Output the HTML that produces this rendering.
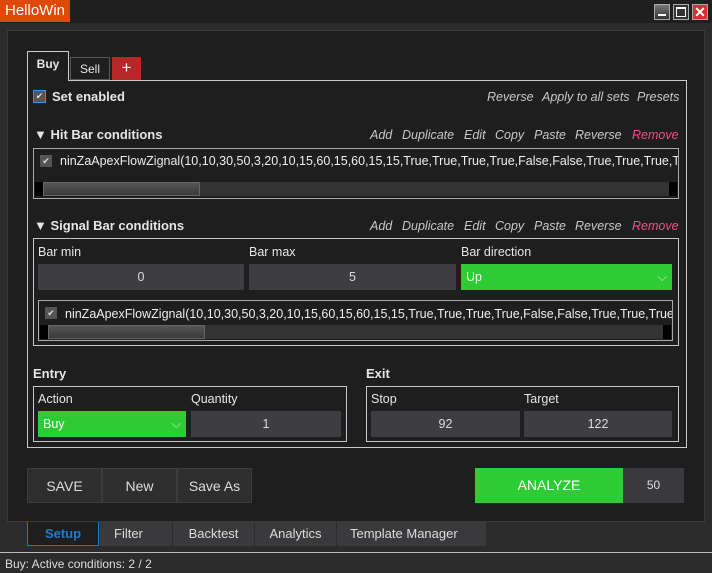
<!DOCTYPE html>
<html><head><style>
*{margin:0;padding:0;box-sizing:border-box}
body{width:712px;height:573px;background:#2b2b2b;font-family:"Liberation Sans",sans-serif;font-size:13px;color:#e6e6e6;position:relative;overflow:hidden}
.a{position:absolute}
.t{position:absolute;white-space:nowrap;line-height:16px}
.lk{font-style:italic;color:#c8c8c8;font-size:12.5px}
.inp{position:absolute;background:#3d3d42;color:#ddd;text-align:center;line-height:26px;font-size:12.5px}
.grn{position:absolute;background:#2ecc34;color:#fff;line-height:26px;padding-left:5px;font-size:12.5px}
.box{position:absolute;border:1px solid #c8c8c8}
.cb{position:absolute;width:12px;height:12px;background:#555;color:#ddd;font-size:9px;line-height:12px;text-align:center}
.btn{position:absolute;background:#2e2e2e;border:1px solid #3c3c3c;color:#ddd;text-align:center;line-height:34px;font-size:14px}
.bt{position:absolute;background:#3a3a3d;color:#ddd;text-align:center;line-height:24px;top:522px;height:24px}
.sb{position:absolute;height:14px;background:#333}
.sb i{position:absolute;left:0;top:0;width:8px;height:14px;background:#000}
.sb b{position:absolute;left:8px;top:0;width:157px;height:14px;background:linear-gradient(#555,#3a3a3a);border:1px solid #666}
.sb u{position:absolute;right:0;top:0;width:8px;height:14px;background:#000}
</style></head><body>
<div class="a" style="left:0;top:0;width:712px;height:23px;background:#1f1f1f"></div>
<div class="a" style="left:0;top:0;width:70px;height:22px;background:#e0480a;color:#fff;font-size:15px;line-height:22px;padding-left:5px">HelloWin</div>
<div class="a" style="left:654px;top:4px;width:16px;height:16px;background:linear-gradient(#777,#333);border:1px solid #aaa"><div class="a" style="left:3px;top:9px;width:8px;height:2px;background:#fff"></div></div>
<div class="a" style="left:673px;top:4px;width:16px;height:16px;background:#333;border:1px solid #aaa"><div class="a" style="left:2px;top:2px;width:10px;height:10px;border:1px solid #fff;border-top-width:2px"></div></div>
<div class="a" style="left:692px;top:4px;width:16px;height:16px;background:#d43030;border:1px solid #aaa;color:#fff;font-weight:bold;font-size:14px;line-height:14px;text-align:center">✕</div>

<div class="a" style="left:7px;top:30px;width:698px;height:492px;background:#1e1e1e;border:1px solid #3a3a3a"></div>

<div class="a" style="left:27px;top:51px;width:42px;height:30px;border:1px solid #ccc;border-bottom:none;background:#1e1e1e;z-index:2;font-weight:bold;font-size:12px;text-align:center;line-height:24px">Buy</div>
<div class="a" style="left:70px;top:57px;width:40px;height:23px;border:1px solid #555;text-align:center;line-height:22px;font-size:12px">Sell</div>
<div class="a" style="left:112px;top:57px;width:29px;height:23px;background:#b52828;color:#fff;text-align:center;line-height:22px;font-size:17px">+</div>

<div class="box" style="left:27px;top:80px;width:660px;height:368px"></div>
<div class="a" style="left:33px;top:90px;width:13px;height:13px;border:1px solid #3d8ee0;background:#555;color:#ddd;font-size:9px;line-height:11px;text-align:center">✔</div>
<div class="t" style="left:52px;top:89px;font-weight:bold">Set enabled</div>
<div class="t lk" style="left:487px;top:89px">Reverse</div>
<div class="t lk" style="left:542px;top:89px">Apply to all sets</div>
<div class="t lk" style="left:637px;top:89px">Presets</div>

<div class="t" style="left:34px;top:127px;font-weight:bold">▼ Hit Bar conditions</div>
<div class="t lk" style="left:370px;top:127px">Add</div>
<div class="t lk" style="left:402px;top:127px">Duplicate</div>
<div class="t lk" style="left:464px;top:127px">Edit</div>
<div class="t lk" style="left:495px;top:127px">Copy</div>
<div class="t lk" style="left:534px;top:127px">Paste</div>
<div class="t lk" style="left:575px;top:127px">Reverse</div>
<div class="t lk" style="left:632px;top:127px;color:#f0508c">Remove</div>
<div class="box" style="left:33px;top:148px;width:646px;height:51px;border-color:#aaa;overflow:hidden">
<div class="cb" style="left:6px;top:6px">✔</div>
<div class="t" style="left:26px;top:4px;font-size:12.5px;color:#eee">ninZaApexFlowZignal(10,10,30,50,3,20,10,15,60,15,60,15,15,True,True,True,True,False,False,True,True,True,True,True</div>
<div class="sb" style="left:1px;top:33px;width:642px"><i></i><b></b><u></u></div>
</div>

<div class="t" style="left:34px;top:218px;font-weight:bold">▼ Signal Bar conditions</div>
<div class="t lk" style="left:370px;top:218px">Add</div>
<div class="t lk" style="left:402px;top:218px">Duplicate</div>
<div class="t lk" style="left:464px;top:218px">Edit</div>
<div class="t lk" style="left:495px;top:218px">Copy</div>
<div class="t lk" style="left:534px;top:218px">Paste</div>
<div class="t lk" style="left:575px;top:218px">Reverse</div>
<div class="t lk" style="left:632px;top:218px;color:#f0508c">Remove</div>
<div class="box" style="left:33px;top:238px;width:646px;height:108px"></div>
<div class="t" style="left:38px;top:244px;font-size:12.5px">Bar min</div>
<div class="t" style="left:249px;top:244px;font-size:12.5px">Bar max</div>
<div class="t" style="left:461px;top:244px;font-size:12.5px">Bar direction</div>
<div class="inp" style="left:38px;top:264px;width:206px">0</div>
<div class="inp" style="left:249px;top:264px;width:207px">5</div>
<div class="grn" style="left:461px;top:264px;width:211px">Up<span style="position:absolute;right:5px;color:#c8f0c8">⌵</span></div>
<div class="box" style="left:38px;top:300px;width:635px;height:41px;border-color:#aaa;overflow:hidden">
<div class="cb" style="left:6px;top:6px">✔</div>
<div class="t" style="left:26px;top:5px;font-size:12.5px;color:#eee">ninZaApexFlowZignal(10,10,30,50,3,20,10,15,60,15,60,15,15,True,True,True,True,False,False,True,True,True,True</div>
<div class="sb" style="left:1px;top:24px;width:631px"><i></i><b></b><u></u></div>
</div>

<div class="t" style="left:33px;top:366px;font-weight:bold">Entry</div>
<div class="t" style="left:366px;top:366px;font-weight:bold">Exit</div>
<div class="box" style="left:33px;top:386px;width:314px;height:56px"></div>
<div class="box" style="left:366px;top:386px;width:313px;height:56px"></div>
<div class="t" style="left:38px;top:391px;font-size:12.5px">Action</div>
<div class="t" style="left:191px;top:391px;font-size:12.5px">Quantity</div>
<div class="t" style="left:371px;top:391px;font-size:12.5px">Stop</div>
<div class="t" style="left:524px;top:391px;font-size:12.5px">Target</div>
<div class="grn" style="left:38px;top:411px;width:148px">Buy<span style="position:absolute;right:5px;color:#c8f0c8">⌵</span></div>
<div class="inp" style="left:191px;top:411px;width:150px">1</div>
<div class="inp" style="left:371px;top:411px;width:149px">92</div>
<div class="inp" style="left:524px;top:411px;width:148px">122</div>

<div class="btn" style="left:27px;top:468px;width:75px;height:35px">SAVE</div>
<div class="btn" style="left:102px;top:468px;width:75px;height:35px">New</div>
<div class="btn" style="left:177px;top:468px;width:75px;height:35px">Save As</div>
<div class="a" style="left:475px;top:468px;width:148px;height:35px;background:#2ecc34;color:#fff;text-align:center;line-height:35px;font-size:14px">ANALYZE</div>
<div class="a" style="left:623px;top:468px;width:61px;height:35px;background:#3a3a3e;color:#ddd;text-align:center;line-height:35px;font-size:12px">50</div>

<div class="bt" style="left:27px;width:72px;background:#1e1e1e;border:1px solid #1f78c8;border-top:none;color:#1f7ad0;font-weight:bold">Setup</div>
<div class="bt" style="left:100px;width:72px;text-align:left;padding-left:14px">Filter</div>
<div class="bt" style="left:173px;width:81px">Backtest</div>
<div class="bt" style="left:255px;width:81px">Analytics</div>
<div class="bt" style="left:337px;width:149px;text-align:left;padding-left:13px">Template Manager</div>

<div class="a" style="left:0;top:552px;width:712px;height:1px;background:#bbb"></div>
<div class="t" style="left:5px;top:556px;font-size:12px;color:#ddd">Buy: Active conditions: 2 / 2</div>
</body></html>
